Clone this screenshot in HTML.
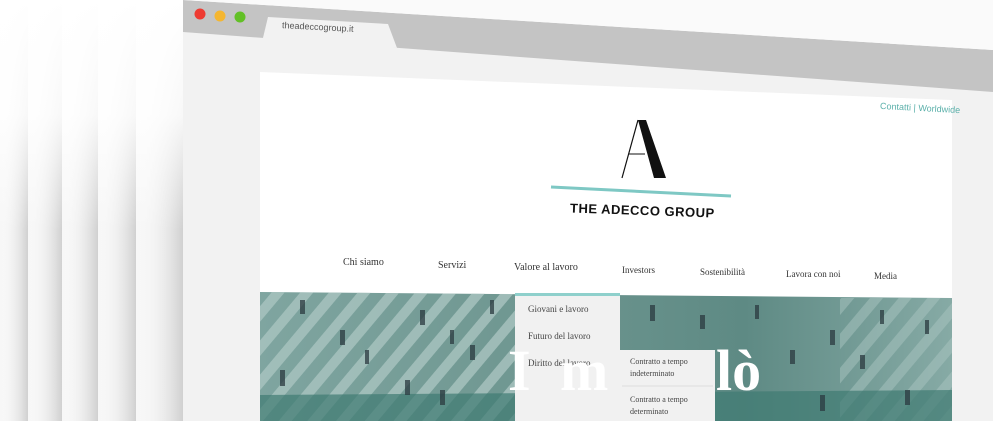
<!DOCTYPE html>
<html><head><meta charset="utf-8"><style>
html,body{margin:0;padding:0;width:993px;height:421px;overflow:hidden;background:#fff;font-family:"Liberation Sans",sans-serif}
svg{position:absolute;left:0;top:0}
.t{position:absolute;white-space:nowrap}
</style></head><body>
<svg width="993" height="421" viewBox="0 0 993 421">
<defs>
<linearGradient id="sh" x1="0" x2="1" y1="0" y2="0">
<stop offset="0" stop-color="#fff" stop-opacity="0"/>
<stop offset="1" stop-color="#d0d0d0"/>
</linearGradient>
<linearGradient id="fade" x1="0" x2="0" y1="0" y2="1">
<stop offset="0" stop-color="#fff"/>
<stop offset="0.5" stop-color="#fff" stop-opacity="0.85"/>
<stop offset="1" stop-color="#fff" stop-opacity="0"/>
</linearGradient>
<linearGradient id="img" x1="0" x2="1" y1="0" y2="0">
<stop offset="0" stop-color="#7fa5a0"/>
<stop offset="0.4" stop-color="#6e9690"/>
<stop offset="0.7" stop-color="#5e8a84"/>
<stop offset="1" stop-color="#86aaa5"/>
</linearGradient>
<pattern id="str" width="22" height="22" patternUnits="userSpaceOnUse" patternTransform="rotate(40)">
<rect width="10" height="22" fill="#a9c4c0"/>
</pattern>
</defs>
<rect x="0" y="0" width="185" height="421" fill="#f7f7f7"/>
<rect x="0" y="0" width="28" height="421" fill="url(#sh)"/>
<rect x="28" y="0" width="34" height="421" fill="url(#sh)"/>
<rect x="62" y="0" width="36" height="421" fill="url(#sh)"/>
<rect x="98" y="0" width="38" height="421" fill="url(#sh)"/>
<rect x="136" y="0" width="47" height="421" fill="url(#sh)"/>
<rect x="0" y="0" width="185" height="230" fill="url(#fade)"/>
<polygon points="183,0 993,58 993,421 183,421" fill="#f2f2f2"/>
<polygon points="183,0 993,50 993,92 183,32" fill="#c4c4c4"/>
<polygon points="183,0 993,50 993,0" fill="#fafafa"/>
<polygon points="268,17 388,24 397,48 262,42" fill="#f2f2f2"/>
<circle cx="200" cy="14" r="5.5" fill="#ee3b32"/>
<circle cx="220" cy="16" r="5.5" fill="#f4b630"/>
<circle cx="240" cy="17" r="5.5" fill="#62c026"/>
<polygon points="260,72 952,100 952,421 260,421" fill="#fff"/>
<polygon points="260,292 952,298 952,421 260,421" fill="url(#img)"/>
<polygon points="260,292 515,294 515,421 260,421" fill="url(#str)" opacity="0.8"/>
<polygon points="840,298 952,298 952,421 840,421" fill="url(#str)" opacity="0.5"/>
<polygon points="260,395 952,390 952,421 260,421" fill="#3f7a72" opacity="0.7"/>
<g fill="#2b3a40" opacity="0.75">
<rect x="300" y="300" width="5" height="14"/><rect x="340" y="330" width="5" height="15"/><rect x="365" y="350" width="4" height="14"/><rect x="420" y="310" width="5" height="15"/><rect x="450" y="330" width="4" height="14"/><rect x="470" y="345" width="5" height="15"/><rect x="490" y="300" width="4" height="14"/><rect x="280" y="370" width="5" height="16"/><rect x="405" y="380" width="5" height="15"/><rect x="440" y="390" width="5" height="15"/><rect x="650" y="305" width="5" height="16"/><rect x="700" y="315" width="5" height="14"/><rect x="755" y="305" width="4" height="14"/><rect x="790" y="350" width="5" height="14"/><rect x="830" y="330" width="5" height="15"/><rect x="860" y="355" width="5" height="14"/><rect x="880" y="310" width="4" height="14"/><rect x="905" y="390" width="5" height="15"/><rect x="820" y="395" width="5" height="16"/><rect x="925" y="320" width="4" height="14"/>
</g>
<rect x="515" y="295" width="105" height="126" fill="#f1f1f1"/>
<rect x="515" y="293" width="105" height="3" fill="#8fd0cc"/>
<rect x="620" y="350" width="95" height="71" fill="#f1f1f1"/>
<line x1="622" y1="386" x2="713" y2="386" stroke="#ddd"/>
<path d="M638,120 L646,120 L666,178 L654,178 Z" fill="#111"/>
<path d="M638,120 L622,178" stroke="#111" stroke-width="1.2"/>
<path d="M629,154 L645,154" stroke="#111" stroke-width="1"/>
<path d="M551,187 L731,196" stroke="#7ec8c4" stroke-width="3"/>
</svg>
<div class="t" style="left:282px;top:22px;font-size:9px;color:#555;transform:rotate(3deg)">theadeccogroup.it</div>
<div class="t" style="left:880px;top:103px;font-size:9px;color:#5bb0aa;transform:rotate(3deg)">Contatti | Worldwide</div>
<div class="t" style="left:570px;top:203px;font-size:13px;font-weight:bold;letter-spacing:0.5px;color:#111;transform:rotate(2deg)">THE ADECCO GROUP</div>
<div class="t" style="left:343px;top:257px;font-size:10px;font-family:'Liberation Serif',serif;color:#333">Chi siamo</div>
<div class="t" style="left:438px;top:260px;font-size:10px;font-family:'Liberation Serif',serif;color:#333">Servizi</div>
<div class="t" style="left:514px;top:262px;font-size:10px;font-family:'Liberation Serif',serif;color:#333">Valore al lavoro</div>
<div class="t" style="left:622px;top:265px;font-size:9px;font-family:'Liberation Serif',serif;color:#333">Investors</div>
<div class="t" style="left:700px;top:267px;font-size:9px;font-family:'Liberation Serif',serif;color:#333">Sostenibilità</div>
<div class="t" style="left:786px;top:269px;font-size:9px;font-family:'Liberation Serif',serif;color:#333">Lavora con noi</div>
<div class="t" style="left:874px;top:271px;font-size:9px;font-family:'Liberation Serif',serif;color:#333">Media</div>
<div class="t" style="left:528px;top:304px;font-size:9px;font-family:'Liberation Serif',serif;color:#444">Giovani e lavoro</div>
<div class="t" style="left:528px;top:331px;font-size:9px;font-family:'Liberation Serif',serif;color:#444">Futuro del lavoro</div>
<div class="t" style="left:528px;top:358px;font-size:9px;font-family:'Liberation Serif',serif;color:#444">Diritto del lavoro</div>
<div class="t" style="left:630px;top:356px;font-size:8px;line-height:12px;font-family:'Liberation Serif',serif;color:#444">Contratto a tempo<br>indeterminato</div>
<div class="t" style="left:630px;top:394px;font-size:8px;line-height:12px;font-family:'Liberation Serif',serif;color:#444">Contratto a tempo<br>determinato</div>
<div class="t" style="left:508px;top:336px;font-size:58px;font-weight:bold;font-family:'Liberation Serif',serif;color:#fff;line-height:70px">I</div>
<div class="t" style="left:560px;top:336px;font-size:58px;font-weight:bold;font-family:'Liberation Serif',serif;color:#fff;line-height:70px">m</div>
<div class="t" style="left:716px;top:336px;font-size:58px;font-weight:bold;font-family:'Liberation Serif',serif;color:#fff;line-height:70px">lò</div>
</body></html>
